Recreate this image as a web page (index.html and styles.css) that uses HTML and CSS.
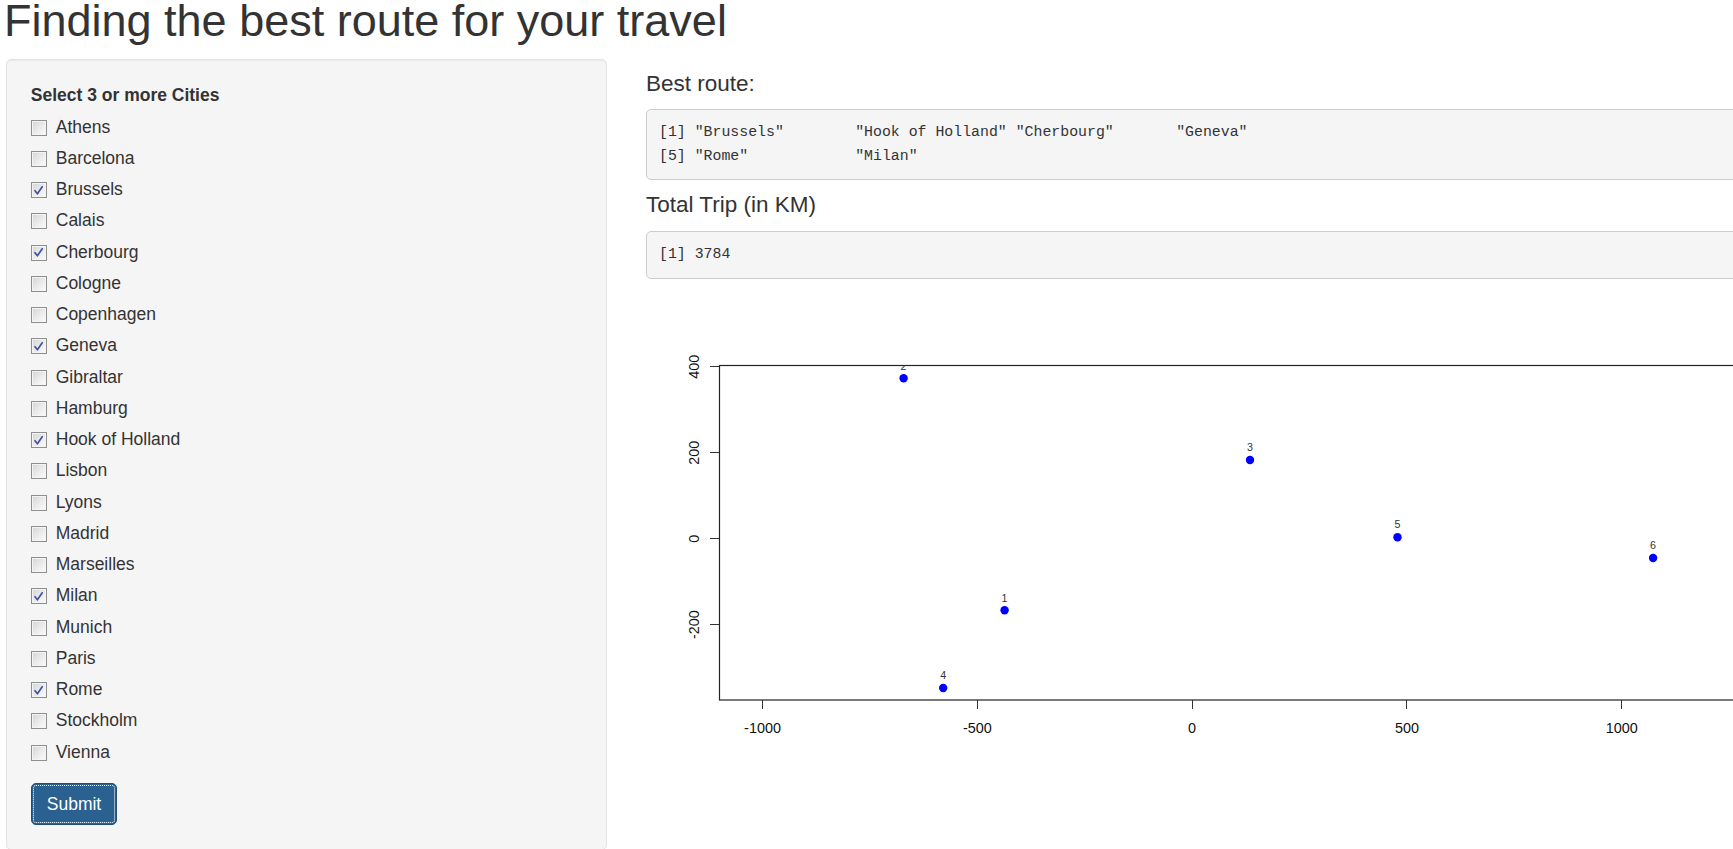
FILE: index.html
```html
<!DOCTYPE html>
<html lang="en">
<head>
<meta charset="utf-8">
<title>Finding the best route for your travel</title>
<link rel="stylesheet" href="styles.css">
</head>
<body>
<div class="page">
  <h1 class="title">Finding the best route for your travel</h1>
  <div class="layout">
    <aside class="well">
      <form class="form">
        <div class="form-group">
          <label class="control-label">Select 3 or more Cities</label>
          <div class="options">
            <label class="checkbox"><span class="cb"></span><span>Athens</span></label>
            <label class="checkbox"><span class="cb"></span><span>Barcelona</span></label>
            <label class="checkbox"><span class="cb"><svg class="tick" viewBox="0 0 10 10"><path d="M1.8 5.2 L4 8 L8.4 1.6"/></svg></span><span>Brussels</span></label>
            <label class="checkbox"><span class="cb"></span><span>Calais</span></label>
            <label class="checkbox"><span class="cb"><svg class="tick" viewBox="0 0 10 10"><path d="M1.8 5.2 L4 8 L8.4 1.6"/></svg></span><span>Cherbourg</span></label>
            <label class="checkbox"><span class="cb"></span><span>Cologne</span></label>
            <label class="checkbox"><span class="cb"></span><span>Copenhagen</span></label>
            <label class="checkbox"><span class="cb"><svg class="tick" viewBox="0 0 10 10"><path d="M1.8 5.2 L4 8 L8.4 1.6"/></svg></span><span>Geneva</span></label>
            <label class="checkbox"><span class="cb"></span><span>Gibraltar</span></label>
            <label class="checkbox"><span class="cb"></span><span>Hamburg</span></label>
            <label class="checkbox"><span class="cb"><svg class="tick" viewBox="0 0 10 10"><path d="M1.8 5.2 L4 8 L8.4 1.6"/></svg></span><span>Hook of Holland</span></label>
            <label class="checkbox"><span class="cb"></span><span>Lisbon</span></label>
            <label class="checkbox"><span class="cb"></span><span>Lyons</span></label>
            <label class="checkbox"><span class="cb"></span><span>Madrid</span></label>
            <label class="checkbox"><span class="cb"></span><span>Marseilles</span></label>
            <label class="checkbox"><span class="cb"><svg class="tick" viewBox="0 0 10 10"><path d="M1.8 5.2 L4 8 L8.4 1.6"/></svg></span><span>Milan</span></label>
            <label class="checkbox"><span class="cb"></span><span>Munich</span></label>
            <label class="checkbox"><span class="cb"></span><span>Paris</span></label>
            <label class="checkbox"><span class="cb"><svg class="tick" viewBox="0 0 10 10"><path d="M1.8 5.2 L4 8 L8.4 1.6"/></svg></span><span>Rome</span></label>
            <label class="checkbox"><span class="cb"></span><span>Stockholm</span></label>
            <label class="checkbox"><span class="cb"></span><span>Vienna</span></label>
          </div>
        </div>
        <button type="button" class="btn">Submit</button>
      </form>
    </aside>
    <main class="main">
      <h4 class="heading">Best route:</h4>
      <pre class="output">[1] "Brussels"        "Hook of Holland" "Cherbourg"       "Geneva"
[5] "Rome"            "Milan"</pre>
      <h4 class="heading">Total Trip (in KM)</h4>
      <pre class="output">[1] 3784</pre>
      <div class="plot">
        <svg class="plot-svg" width="1232" height="500" viewBox="0 0 1232 500">
          <defs>
            <clipPath id="region"><rect x="73.5" y="73.5" width="1100" height="334.5"/></clipPath>
          </defs>
          <g class="axis">
            <line x1="73.5" y1="74.5" x2="64" y2="74.5"/>
            <line x1="73.5" y1="160.5" x2="64" y2="160.5"/>
            <line x1="73.5" y1="246.5" x2="64" y2="246.5"/>
            <line x1="73.5" y1="332.5" x2="64" y2="332.5"/>
            <line x1="116.5" y1="408" x2="116.5" y2="417"/>
            <line x1="331.5" y1="408" x2="331.5" y2="417"/>
            <line x1="546.5" y1="408" x2="546.5" y2="417"/>
            <line x1="760.5" y1="408" x2="760.5" y2="417"/>
            <line x1="975.5" y1="408" x2="975.5" y2="417"/>
          </g>
          <g class="ylab">
            <text transform="translate(53.3 74.7) rotate(-90)">400</text>
            <text transform="translate(53.3 160.7) rotate(-90)">200</text>
            <text transform="translate(53.3 246.7) rotate(-90)">0</text>
            <text transform="translate(53.3 332.7) rotate(-90)">-200</text>
          </g>
          <g class="xlab">
            <text x="116.5" y="441">-1000</text>
            <text x="331.3" y="441">-500</text>
            <text x="546.1" y="441">0</text>
            <text x="760.9" y="441">500</text>
            <text x="975.7" y="441">1000</text>
          </g>
          <rect class="frame" x="73.5" y="73.5" width="1100" height="334.5"/>
          <g clip-path="url(#region)">
            <g class="pts">
              <circle cx="358.6" cy="318.3" r="4.2"/>
              <circle cx="257.6" cy="86.3" r="4.2"/>
              <circle cx="604" cy="168" r="4.2"/>
              <circle cx="297.2" cy="396" r="4.2"/>
              <circle cx="751.5" cy="245.3" r="4.2"/>
              <circle cx="1007.1" cy="266" r="4.2"/>
            </g>
            <g class="ptlab">
              <text x="358.6" y="309.5">1</text>
              <text x="257.6" y="77.5">2</text>
              <text x="604" y="159">3</text>
              <text x="297.2" y="387">4</text>
              <text x="751.5" y="236.3">5</text>
              <text x="1007.1" y="257">6</text>
            </g>
          </g>
        </svg>
      </div>
    </main>
  </div>
</div>
</body>
</html>
```
FILE: styles.css
```css
* { box-sizing: border-box; }

html, body {
  margin: 0;
  padding: 0;
  overflow: hidden;
  background: #fff;
}

body {
  font-family: "Liberation Sans", Arial, Helvetica, sans-serif;
  font-size: 17.5px;
  line-height: 25px;
  color: #333;
}

.page {
  padding-left: 6px;
  width: 1900px;
}

.title {
  font-size: 45px;
  line-height: 41px;
  font-weight: normal;
  margin: 0 0 17.5px -2px;
  color: #333;
}

.layout {
  display: flex;
  align-items: flex-start;
  gap: 39px;
}

.well {
  flex: 0 0 601px;
  width: 601px;
  padding: 23.75px;
  background: #f5f5f5;
  border: 1px solid #e3e3e3;
  border-radius: 5px;
  box-shadow: inset 0 1px 1px rgba(0, 0, 0, 0.05);
}

.form-group {
  margin-bottom: 18.75px;
}

.control-label {
  display: block;
  font-weight: bold;
  margin-bottom: 6.25px;
}

.options {
  display: flex;
  flex-direction: column;
  gap: 6.25px;
}

.checkbox {
  display: flex;
  align-items: center;
  gap: 9px;
  height: 25px;
  font-weight: normal;
}

.cb {
  flex: 0 0 16px;
  width: 16px;
  height: 16px;
  border: 1px solid #8e8f8f;
  background: linear-gradient(135deg, #d4d4d4 0%, #eaeaea 50%, #fcfcfc 100%);
  box-shadow: inset 0 0 0 1px #f4f4f4;
  display: flex;
  align-items: center;
  justify-content: center;
  margin-top: 1px;
}

.tick {
  width: 11px;
  height: 11px;
  fill: none;
  stroke: #3d51a0;
  stroke-width: 1.5;
  stroke-linecap: round;
  stroke-linejoin: round;
}

.btn {
  display: inline-block;
  font-family: "Liberation Sans", Arial, Helvetica, sans-serif;
  font-size: 17.5px;
  line-height: 25px;
  padding: 7.5px 15px;
  color: #fff;
  background: #2a6190;
  border: 1px solid #204d74;
  border-radius: 5px;
  outline: 1px dotted #fff;
  outline-offset: -3px;
  cursor: pointer;
}

.main {
  flex: 0 0 1232px;
  width: 1232px;
}

.heading {
  font-size: 22.5px;
  line-height: 1.1;
  font-weight: normal;
  margin: 13px 0 12.5px;
  color: #333;
}

.output {
  margin: 0 0 13px;
  padding: 11.5px 12px;
  font-family: "Liberation Mono", "Courier New", monospace;
  font-size: 14.87px;
  line-height: 23.3px;
  color: #333;
  background: #f5f5f5;
  border: 1px solid #ccc;
  border-radius: 5px;
  white-space: pre;
}

.plot {
  height: 500px;
}

.plot-svg {
  display: block;
  font-family: "Liberation Sans", Arial, Helvetica, sans-serif;
}

.axis line {
  stroke: #333;
  stroke-width: 1;
}

.frame {
  fill: none;
  stroke: #222;
  stroke-width: 1.2;
}

.ylab text,
.xlab text {
  font-size: 14.4px;
  fill: #111;
  text-anchor: middle;
}

.pts circle {
  fill: #0000ff;
}

.ptlab text {
  font-size: 10.7px;
  fill: #333;
  text-anchor: middle;
}
```
